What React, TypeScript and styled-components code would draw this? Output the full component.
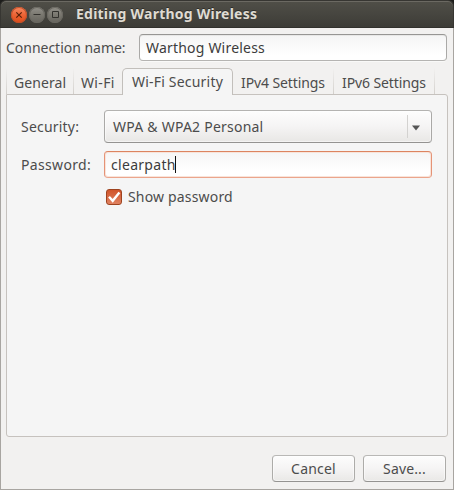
import React from "react";
import styled, { createGlobalStyle } from "styled-components";

const GlobalStyle = createGlobalStyle`
  * { box-sizing: border-box; }
  html, body { margin: 0; padding: 0; background: #1d1d1b; }
  body { width: 454px; height: 490px; overflow: hidden; }
`;

const Window = styled.div`
  width: 454px;
  height: 490px;
  display: flex;
  flex-direction: column;
  color: #4c4c4c;
  font: 14px/20px "Noto Sans", "Open Sans", sans-serif;
`;

const TitleBar = styled.header`
  height: 28px;
  flex: none;
  display: flex;
  align-items: center;
  padding: 1px 0 0 10px;
  border: 1px solid #373632;
  border-bottom-color: #32312d;
  border-radius: 6px 6px 0 0;
  background: linear-gradient(#504f48, #3d3c37);
  box-shadow: inset 0 1px #6b6962;
`;

const WindowControls = styled.div`
  display: flex;
  gap: 2px;
  margin-right: 13px;
`;

const Control = styled.span<{ $close?: boolean }>`
  width: 16px;
  height: 16px;
  display: flex;
  border-radius: 50%;
  color: ${(p) => (p.$close ? "#5a2008" : "#33322e")};
  background: ${(p) =>
    p.$close
      ? "linear-gradient(#f68a63, #ec6334 50%, #df4a16)"
      : "linear-gradient(#93918a, #79776f 50%, #66645d)"};
  box-shadow: inset 0 0 0 1px ${(p) => (p.$close ? "#c2512b" : "#6a6861")};
  svg { display: block; }
`;

const Text = styled.span<{ $track?: number }>`
  letter-spacing: ${(p) => p.$track ?? 0}px;
  white-space: nowrap;
`;

const Title = styled(Text)`
  margin-top: -2px;
  font-weight: 700;
  color: #dfdbd2;
  text-shadow: 0 -1px #2f2e2a;
`;

const Body = styled.main`
  flex: 1;
  display: flex;
  flex-direction: column;
  padding: 6px 5px 7px;
  border: solid #a8a5a1;
  border-width: 0 1px 1px;
  background: #f2f1f0;
`;

const NameRow = styled.label`
  display: flex;
  justify-content: space-between;
  align-items: center;
  height: 27px;
  padding-right: 1px;
`;

const Entry = styled.div<{ $width: number; $focused?: boolean }>`
  width: ${(p) => p.$width}px;
  height: 27px;
  display: flex;
  align-items: center;
  padding: 0 6px;
  color: #3c3c3c;
  border: 1px solid;
  border-color: ${(p) => (p.$focused ? "#dc8460 #e59376 #eba58c" : "#979694 #aaa9a7 #b5b4b2")};
  border-radius: 4px;
  background: linear-gradient(#f5f5f5, #fff 80%);
  box-shadow: ${(p) => (p.$focused ? "inset 0 0 0 1px #f9e4da" : "inset 0 1px #e8e8e7, 0 1px #f9f9f8")};
`;

const Caret = styled.span`
  width: 1px;
  height: 17px;
  margin-left: -1px;
  background: #111;
`;

const Tabs = styled.nav`
  display: flex;
  height: 26px;
  flex: none;
  margin-top: 7px;
`;

const Tab = styled.div<{ $width: number; $edge?: "left" | "right" | "both" }>`
  width: ${(p) => p.$width}px;
  height: 26px;
  padding: 5px 0 0 ${(p) => (p.$edge ? 8 : 7)}px;
  background-image: ${(p) => {
    const line = "linear-gradient(#f2f1f0, #d3d0cc)";
    return p.$edge ? `${line}, ${line}` : "none";
  }};
  background-repeat: no-repeat;
  background-position: left top, right top;
  background-size: ${(p) =>
    `${p.$edge === "left" || p.$edge === "both" ? 1 : 0}px 100%, ${p.$edge === "right" || p.$edge === "both" ? 1 : 0}px 100%`};
`;

const ActiveTab = styled.div`
  width: 111px;
  height: 27px;
  z-index: 1;
  padding: 3px 0 0 9px;
  border: 1px solid #c2bfbb;
  border-bottom: 0;
  border-radius: 5px 5px 0 0;
  background: #f5f5f5;
`;

const Panel = styled.section`
  height: 343px;
  padding: 15px 15px 0 14px;
  border: 1px solid #c6c2be;
  border-radius: 0 3px 3px 3px;
  background: #f5f5f5;
`;

const Form = styled.div`
  display: grid;
  grid-template-columns: 83px 328px;
  grid-template-rows: 33px 27px 22px;
  row-gap: 8px;
  align-items: center;
`;

const Select = styled.div`
  height: 33px;
  display: flex;
  align-items: center;
  justify-content: space-between;
  padding: 0 0 0 8px;
  border: 1px solid;
  border-color: #b4b3b1 #aaa9a7 #949391;
  border-radius: 4px;
  background: linear-gradient(#fdfdfd, #f5f4f4 50%, #e8e7e5);
  box-shadow: inset 0 0 0 1px rgba(255, 255, 255, 0.5);
`;

const Arrow = styled.span`
  width: 24px;
  height: 23px;
  display: flex;
  align-items: center;
  padding: 2px 0 0 4px;
  border-left: 1px solid #d3d2d0;
`;

const CheckRow = styled.div`
  grid-column: 2;
  display: flex;
  align-items: center;
  gap: 6px;
  padding-left: 2px;
`;

const Check = styled.span`
  width: 16px;
  height: 16px;
  border: 1px solid #9e431f;
  border-radius: 3px;
  background: linear-gradient(#d0542a, #e08261);
  svg { display: block; }
`;

const Actions = styled.footer`
  display: flex;
  justify-content: flex-end;
  gap: 8px;
  margin-top: auto;
  padding-right: 2px;
`;

const Button = styled.button`
  width: 83px;
  height: 27px;
  padding: 0;
  color: inherit;
  font: inherit;
  border: 1px solid;
  border-color: #b9b8b6 #adaca9 #959492;
  border-radius: 4px;
  background: linear-gradient(#fdfdfd, #f5f4f4 50%, #e9e8e6);
  box-shadow: inset 0 0 0 1px rgba(255, 255, 255, 0.5);
`;

export default function App() {
  return (
    <>
      <GlobalStyle />
      <Window>
        <TitleBar>
          <WindowControls>
            <Control $close>
              <svg width="16" height="16" fill="none" stroke="currentColor" strokeWidth="1.2">
                <path d="M5.3 5.3l5.4 5.4M10.7 5.3l-5.4 5.4" />
              </svg>
            </Control>
            <Control>
              <svg width="16" height="16" fill="none" stroke="currentColor">
                <path d="M4.5 7.5h7" />
              </svg>
            </Control>
            <Control>
              <svg width="16" height="16" fill="none" stroke="currentColor">
                <path d="M5.5 4.5h6v6h-6z" />
              </svg>
            </Control>
          </WindowControls>
          <Title $track={0.23}>Editing Warthog Wireless</Title>
        </TitleBar>
        <Body>
          <NameRow>
            <Text $track={-0.02}>Connection name:</Text>
            <Entry $width={308}>
              <Text $track={0.2}>Warthog Wireless</Text>
            </Entry>
          </NameRow>
          <Tabs>
            <Tab $width={68} $edge="both"><Text $track={0.08}>General</Text></Tab>
            <Tab $width={48}><Text $track={0.35}>Wi-Fi</Text></Tab>
            <ActiveTab><Text $track={0.2}>Wi-Fi Security</Text></ActiveTab>
            <Tab $width={101} $edge="right"><Text $track={-0.1}>IPv4 Settings</Text></Tab>
            <Tab $width={101} $edge="right"><Text $track={-0.1}>IPv6 Settings</Text></Tab>
          </Tabs>
          <Panel>
            <Form>
              <Text $track={0.2}>Security:</Text>
              <Select>
                <Text $track={0.23}>WPA &amp; WPA2 Personal</Text>
                <Arrow>
                  <svg width="8" height="6"><path d="M0 0.5h8L4 5.5z" fill="#555" /></svg>
                </Arrow>
              </Select>
              <Text $track={0.33}>Password:</Text>
              <Entry $width={328} $focused>
                <Text $track={0.3}>clearpath</Text>
                <Caret />
              </Entry>
              <CheckRow>
                <Check>
                  <svg width="14" height="14" fill="none" stroke="#fff" strokeWidth="2.4">
                    <path d="M2 6.8l3.7 4L12.4 2.6" />
                  </svg>
                </Check>
                <Text $track={0.17}>Show password</Text>
              </CheckRow>
            </Form>
          </Panel>
          <Actions>
            <Button><Text $track={0.2}>Cancel</Text></Button>
            <Button><Text $track={0.15}>Save...</Text></Button>
          </Actions>
        </Body>
      </Window>
    </>
  );
}
